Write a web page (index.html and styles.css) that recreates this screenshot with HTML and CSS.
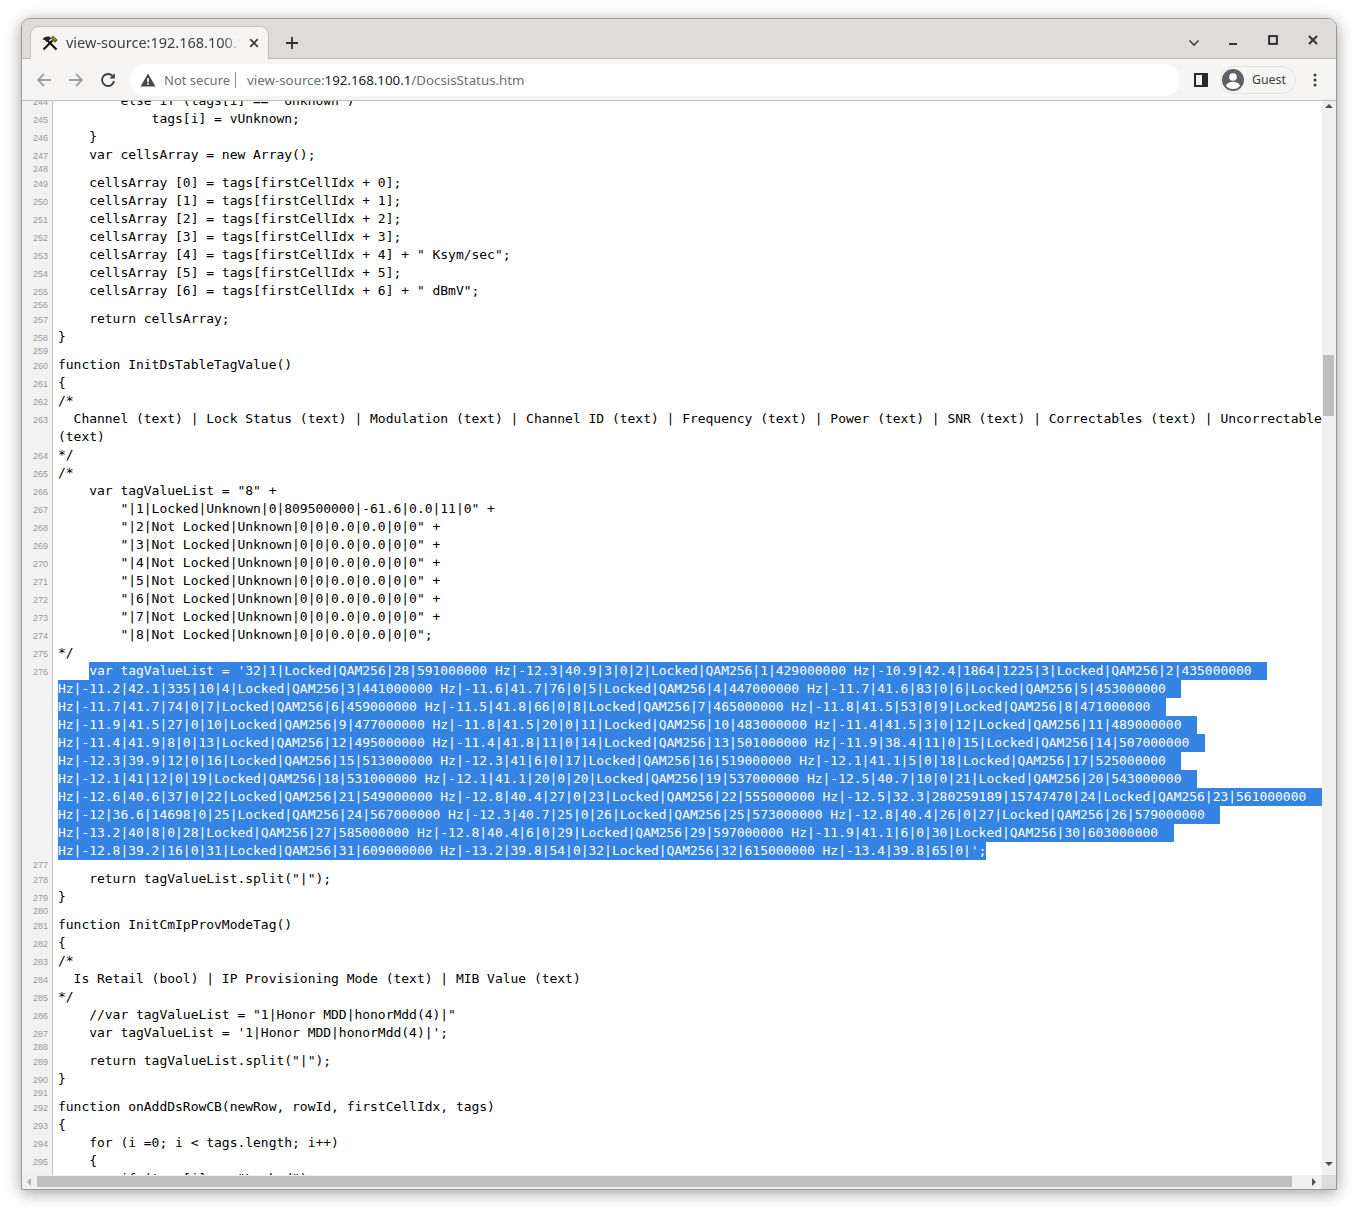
FILE: index.html
```html
<!DOCTYPE html>
<html lang="en">
<head>
<meta charset="utf-8">
<title>view-source:192.168.100.1/DocsisStatus.htm</title>
<link rel="stylesheet" href="styles.css">
</head>
<body>
<div class="window">
  <header class="strip">
    <div class="tab">
      <svg class="favicon" width="16" height="16" viewBox="0 0 16 16"><path d="M14.500 14.500 5.500 5.500" stroke="#111" stroke-width="2.200" fill="none"/><path d="M.5 4.500C2 2 5 1 8 2L9 4 6 5.500 4.500 7C3.500 5.500 2.500 4.500.5 4.500z" fill="#222"/><path d="M1.500 14.500 10.500 5.500" stroke="#111" stroke-width="2.200" fill="none"/><path d="M8.500 3 11 .7 15.800 5 13 7.800z" fill="#5f5f20"/><path d="M10 3.500 11.500 2 14 4.500 13 5.500z" fill="#8e8e3a"/></svg>
      <span class="tab-title">view-source:192.168.100.1/DocsisStatus.htm</span>
      <svg class="tab-close" width="10" height="10" viewBox="0 0 10 10"><path d="M1.200 1.200 8.800 8.800M8.800 1.200 1.200 8.800" stroke="#3c3c3c" stroke-width="1.700"/></svg>
    </div>
    <svg class="newtab" width="14" height="14" viewBox="0 0 14 14"><path d="M7 1v12M1 7h12" stroke="#303030" stroke-width="1.800"/></svg>
    <div class="winctl">
      <svg class="ctl-chev" width="12" height="8" viewBox="0 0 12 8"><path d="M1.500 1.500 6 6l4.500-4.500" stroke="#3c4043" stroke-width="1.600" fill="none"/></svg>
      <svg class="ctl-min" width="10" height="10" viewBox="0 0 10 10"><rect x="1" y="7" width="8" height="2" fill="#2e3436"/></svg>
      <svg class="ctl-max" width="10" height="10" viewBox="0 0 10 10"><rect x="1.100" y="1.100" width="7.800" height="7.800" stroke="#2e3436" stroke-width="2" fill="none"/></svg>
      <svg class="ctl-close" width="10" height="10" viewBox="0 0 10 10"><path d="M1 1 9 9M9 1 1 9" stroke="#2e3436" stroke-width="2"/></svg>
    </div>
  </header>
  <nav class="toolbar">
    <svg class="navbtn" width="16" height="16" viewBox="0 0 16 16"><path d="M15 8H2M8 2 2 8l6 6" stroke="#9aa0a6" stroke-width="1.800" fill="none"/></svg>
    <svg class="navbtn" width="16" height="16" viewBox="0 0 16 16"><path d="M1 8h13M8 2l6 6-6 6" stroke="#9aa0a6" stroke-width="1.800" fill="none"/></svg>
    <svg class="navbtn" width="16" height="16" viewBox="0 0 16 16"><path d="M13.200 4.800A6 6 0 1 0 14 9" stroke="#3c4043" stroke-width="1.900" fill="none"/><path d="M14.800 1.200v5.400H9.400z" fill="#3c4043"/></svg>
    <div class="omnibox">
      <svg class="warn" width="16" height="14" viewBox="0 0 16 14"><path d="M8 .5 15.500 13.500H.5z" fill="#45494d"/><rect x="7.200" y="5" width="1.600" height="4.400" fill="#fff"/><rect x="7.200" y="10.200" width="1.600" height="1.600" fill="#fff"/></svg>
      <span class="notsecure">Not secure</span>
      <span class="sep"></span>
      <span class="url"><span class="url-dim">view-source:</span>192.168.100.1<span class="url-dim">/DocsisStatus.htm</span></span>
    </div>
    <svg class="sidepanel" width="14" height="14" viewBox="0 0 14 14"><rect x="1" y="1" width="12" height="12" fill="none" stroke="#27292b" stroke-width="2"/><rect x="8" y="1" width="5" height="12" fill="#27292b"/></svg>
    <div class="guest">
      <svg width="22" height="22" viewBox="0 0 22 22"><circle cx="11" cy="11" r="11" fill="#5f6368"/><circle cx="11" cy="8" r="3.800" fill="#fff"/><path d="M3.800 16.500c1.600-2.600 4.400-3.700 7.200-3.700s5.600 1.100 7.200 3.700A9 9 0 0 1 11 20a9 9 0 0 1-7.200-3.500z" fill="#fff"/></svg>
      <span class="guest-name">Guest</span>
    </div>
    <svg class="menu" width="4" height="14" viewBox="0 0 4 14"><circle cx="2" cy="2" r="1.500" fill="#3c4043"/><circle cx="2" cy="7" r="1.500" fill="#3c4043"/><circle cx="2" cy="12" r="1.500" fill="#3c4043"/></svg>
  </nav>
  <main class="viewport">
    <div class="scroller">
      <table class="src">
        <tr><td class="num">244</td><td class="code">        else if (tags[i] == "Unknown")</td></tr>
        <tr><td class="num">245</td><td class="code">            tags[i] = vUnknown;</td></tr>
        <tr><td class="num">246</td><td class="code">    }</td></tr>
        <tr><td class="num">247</td><td class="code">    var cellsArray = new Array();</td></tr>
        <tr class="blank"><td class="num">248</td><td class="code"></td></tr>
        <tr><td class="num">249</td><td class="code">    cellsArray [0] = tags[firstCellIdx + 0];</td></tr>
        <tr><td class="num">250</td><td class="code">    cellsArray [1] = tags[firstCellIdx + 1];</td></tr>
        <tr><td class="num">251</td><td class="code">    cellsArray [2] = tags[firstCellIdx + 2];</td></tr>
        <tr><td class="num">252</td><td class="code">    cellsArray [3] = tags[firstCellIdx + 3];</td></tr>
        <tr><td class="num">253</td><td class="code">    cellsArray [4] = tags[firstCellIdx + 4] + " Ksym/sec";</td></tr>
        <tr><td class="num">254</td><td class="code">    cellsArray [5] = tags[firstCellIdx + 5];</td></tr>
        <tr><td class="num">255</td><td class="code">    cellsArray [6] = tags[firstCellIdx + 6] + " dBmV";</td></tr>
        <tr class="blank"><td class="num">256</td><td class="code"></td></tr>
        <tr><td class="num">257</td><td class="code">    return cellsArray;</td></tr>
        <tr><td class="num">258</td><td class="code">}</td></tr>
        <tr class="blank"><td class="num">259</td><td class="code"></td></tr>
        <tr><td class="num">260</td><td class="code">function InitDsTableTagValue()</td></tr>
        <tr><td class="num">261</td><td class="code">{</td></tr>
        <tr><td class="num">262</td><td class="code">/*</td></tr>
        <tr><td class="num">263</td><td class="code">  Channel (text) | Lock Status (text) | Modulation (text) | Channel ID (text) | Frequency (text) | Power (text) | SNR (text) | Correctables (text) | Uncorrectable
(text)</td></tr>
        <tr><td class="num">264</td><td class="code">*/</td></tr>
        <tr><td class="num">265</td><td class="code">/*</td></tr>
        <tr><td class="num">266</td><td class="code">    var tagValueList = "8" +</td></tr>
        <tr><td class="num">267</td><td class="code">        "|1|Locked|Unknown|0|809500000|-61.6|0.0|11|0" +</td></tr>
        <tr><td class="num">268</td><td class="code">        "|2|Not Locked|Unknown|0|0|0.0|0.0|0|0" +</td></tr>
        <tr><td class="num">269</td><td class="code">        "|3|Not Locked|Unknown|0|0|0.0|0.0|0|0" +</td></tr>
        <tr><td class="num">270</td><td class="code">        "|4|Not Locked|Unknown|0|0|0.0|0.0|0|0" +</td></tr>
        <tr><td class="num">271</td><td class="code">        "|5|Not Locked|Unknown|0|0|0.0|0.0|0|0" +</td></tr>
        <tr><td class="num">272</td><td class="code">        "|6|Not Locked|Unknown|0|0|0.0|0.0|0|0" +</td></tr>
        <tr><td class="num">273</td><td class="code">        "|7|Not Locked|Unknown|0|0|0.0|0.0|0|0" +</td></tr>
        <tr><td class="num">274</td><td class="code">        "|8|Not Locked|Unknown|0|0|0.0|0.0|0|0";</td></tr>
        <tr><td class="num">275</td><td class="code">*/</td></tr>
        <tr><td class="num">276</td><td class="code">    <span class="sel">var tagValueList = '32|1|Locked|QAM256|28|591000000 Hz|-12.3|40.9|3|0|2|Locked|QAM256|1|429000000 Hz|-10.9|42.4|1864|1225|3|Locked|QAM256|2|435000000  </span>
<span class="sel">Hz|-11.2|42.1|335|10|4|Locked|QAM256|3|441000000 Hz|-11.6|41.7|76|0|5|Locked|QAM256|4|447000000 Hz|-11.7|41.6|83|0|6|Locked|QAM256|5|453000000  </span>
<span class="sel">Hz|-11.7|41.7|74|0|7|Locked|QAM256|6|459000000 Hz|-11.5|41.8|66|0|8|Locked|QAM256|7|465000000 Hz|-11.8|41.5|53|0|9|Locked|QAM256|8|471000000  </span>
<span class="sel">Hz|-11.9|41.5|27|0|10|Locked|QAM256|9|477000000 Hz|-11.8|41.5|20|0|11|Locked|QAM256|10|483000000 Hz|-11.4|41.5|3|0|12|Locked|QAM256|11|489000000  </span>
<span class="sel">Hz|-11.4|41.9|8|0|13|Locked|QAM256|12|495000000 Hz|-11.4|41.8|11|0|14|Locked|QAM256|13|501000000 Hz|-11.9|38.4|11|0|15|Locked|QAM256|14|507000000  </span>
<span class="sel">Hz|-12.3|39.9|12|0|16|Locked|QAM256|15|513000000 Hz|-12.3|41|6|0|17|Locked|QAM256|16|519000000 Hz|-12.1|41.1|5|0|18|Locked|QAM256|17|525000000  </span>
<span class="sel">Hz|-12.1|41|12|0|19|Locked|QAM256|18|531000000 Hz|-12.1|41.1|20|0|20|Locked|QAM256|19|537000000 Hz|-12.5|40.7|10|0|21|Locked|QAM256|20|543000000  </span>
<span class="sel">Hz|-12.6|40.6|37|0|22|Locked|QAM256|21|549000000 Hz|-12.8|40.4|27|0|23|Locked|QAM256|22|555000000 Hz|-12.5|32.3|280259189|15747470|24|Locked|QAM256|23|561000000  </span>
<span class="sel">Hz|-12|36.6|14698|0|25|Locked|QAM256|24|567000000 Hz|-12.3|40.7|25|0|26|Locked|QAM256|25|573000000 Hz|-12.8|40.4|26|0|27|Locked|QAM256|26|579000000  </span>
<span class="sel">Hz|-13.2|40|8|0|28|Locked|QAM256|27|585000000 Hz|-12.8|40.4|6|0|29|Locked|QAM256|29|597000000 Hz|-11.9|41.1|6|0|30|Locked|QAM256|30|603000000  </span>
<span class="sel">Hz|-12.8|39.2|16|0|31|Locked|QAM256|31|609000000 Hz|-13.2|39.8|54|0|32|Locked|QAM256|32|615000000 Hz|-13.4|39.8|65|0|';</span></td></tr>
        <tr class="blank"><td class="num">277</td><td class="code"></td></tr>
        <tr><td class="num">278</td><td class="code">    return tagValueList.split("|");</td></tr>
        <tr><td class="num">279</td><td class="code">}</td></tr>
        <tr class="blank"><td class="num">280</td><td class="code"></td></tr>
        <tr><td class="num">281</td><td class="code">function InitCmIpProvModeTag()</td></tr>
        <tr><td class="num">282</td><td class="code">{</td></tr>
        <tr><td class="num">283</td><td class="code">/*</td></tr>
        <tr><td class="num">284</td><td class="code">  Is Retail (bool) | IP Provisioning Mode (text) | MIB Value (text)</td></tr>
        <tr><td class="num">285</td><td class="code">*/</td></tr>
        <tr><td class="num">286</td><td class="code">    //var tagValueList = "1|Honor MDD|honorMdd(4)|"</td></tr>
        <tr><td class="num">287</td><td class="code">    var tagValueList = '1|Honor MDD|honorMdd(4)|';</td></tr>
        <tr class="blank"><td class="num">288</td><td class="code"></td></tr>
        <tr><td class="num">289</td><td class="code">    return tagValueList.split("|");</td></tr>
        <tr><td class="num">290</td><td class="code">}</td></tr>
        <tr class="blank"><td class="num">291</td><td class="code"></td></tr>
        <tr><td class="num">292</td><td class="code">function onAddDsRowCB(newRow, rowId, firstCellIdx, tags)</td></tr>
        <tr><td class="num">293</td><td class="code">{</td></tr>
        <tr><td class="num">294</td><td class="code">    for (i =0; i &lt; tags.length; i++)</td></tr>
        <tr><td class="num">295</td><td class="code">    {</td></tr>
        <tr><td class="num">296</td><td class="code">        if (tags[i] == "Locked")</td></tr>
      </table>
    </div>
    <div class="vbar">
      <span class="arrow up"></span>
      <span class="vthumb"></span>
      <span class="arrow down"></span>
    </div>
    <div class="hbar">
      <span class="arrow left"></span>
      <span class="hthumb"></span>
      <span class="arrow right"></span>
    </div>
    <div class="corner"></div>
  </main>
</div>
</body>
</html>
```

FILE: styles.css
```css
* { box-sizing: border-box; }

html, body { margin: 0; height: 100%; background: #fff; }

body {
  padding: 18px 21px 0;
  font-family: "Noto Sans", "Open Sans", sans-serif;
  overflow: hidden;
}

.window {
  width: 1316px;
  height: 1172px;
  display: flex;
  flex-direction: column;
  border: 1px solid #9a9a98;
  border-radius: 9px 9px 0 0;
  background: #f6f5f4;
  box-shadow: 0 3px 16px rgba(0, 0, 0, 0.38);
  overflow: hidden;
}

/* tab strip */
.strip {
  height: 40px;
  flex: none;
  display: flex;
  align-items: flex-end;
  padding-left: 8px;
  background: #dedbd8;
  border-bottom: 1px solid #bdbbb8;
}

.tab {
  width: 239px;
  height: 33px;
  margin-bottom: -1px;
  display: flex;
  align-items: center;
  gap: 8px;
  padding: 0 9px 0 11px;
  background: #f6f5f4;
  border: 1px solid #c4c2bf;
  border-bottom: 0;
  border-radius: 9px 9px 0 0;
}

.favicon { flex: none; }

.tab-title {
  flex: 1;
  min-width: 0;
  margin-bottom: 2px;
  overflow: hidden;
  white-space: nowrap;
  font-size: 14.500px;
  line-height: 20px;
  color: #3c4043;
  -webkit-mask-image: linear-gradient(to right, #000 90%, transparent 100%);
  mask-image: linear-gradient(to right, #000 90%, transparent 100%);
}

.tab-close { flex: none; }

.newtab { margin: 0 0 8px 16px; }

.winctl {
  margin-left: auto;
  align-self: stretch;
  position: relative;
  width: 160px;
  display: flex;
}

.ctl-chev { position: absolute; left: 12px; top: 20px; }
.ctl-min  { position: absolute; left: 52px; top: 17px; }
.ctl-max  { position: absolute; left: 92px; top: 16px; }
.ctl-close { position: absolute; left: 132px; top: 16px; }

/* toolbar */
.toolbar {
  height: 42px;
  flex: none;
  display: flex;
  align-items: center;
  padding: 0 19px 0 14px;
  background: #f6f5f4;
  border-bottom: 1px solid #bfbdbb;
}

.navbtn { flex: none; margin-right: 16px; }

.omnibox {
  width: 1050px;
  height: 32px;
  flex: none;
  margin-left: -2px;
  display: flex;
  align-items: center;
  padding-left: 10px;
  background: #fff;
  border-radius: 16px;
  font-size: 13px;
  letter-spacing: 0;
}

.warn { flex: none; margin-right: 8px; }

.notsecure { color: #6b7075; }

.sep {
  width: 1px;
  height: 16px;
  margin: 0 11px 0 5px;
  background: #8a8d91;
}

.url { color: #202124; white-space: nowrap; font-size: 13.300px; }
.url-dim { color: #6b7075; }

.sidepanel { flex: none; margin-left: 14px; }

.guest {
  width: 76px;
  height: 28px;
  margin-left: 12px;
  flex: none;
  display: flex;
  align-items: center;
  gap: 8px;
  padding-left: 1px;
  border: 1px solid #e3e2e0;
  border-radius: 14px;
}

.guest-name { font-size: 12.300px; color: #3c4043; }

.menu { flex: none; margin-left: 17px; }

/* page area */
.viewport {
  flex: 1;
  min-height: 0;
  display: grid;
  grid-template-columns: 1fr 14px;
  grid-template-rows: 1fr 14px;
  background: #fff;
}

.scroller { overflow: hidden; min-width: 0; min-height: 0; }

.src {
  width: 1300px;
  margin-top: -9px;
  table-layout: fixed;
  border-collapse: separate;
  border-spacing: 0;
}

.src td { padding: 0; vertical-align: baseline; }

.num {
  width: 31px;
  padding-right: 4px !important;
  text-align: right;
  background: #f2f2f2;
  border-right: 1px solid #c4c4c4;
  font-family: "Liberation Sans", Arial, sans-serif;
  font-size: 9px;
  line-height: 10px;
  color: #999;
}

.code {
  padding-left: 5px !important;
  font-family: "DejaVu Sans Mono", monospace;
  font-size: 13px;
  letter-spacing: -0.025px;
  line-height: 18px;
  color: #000;
  white-space: pre;
}

.blank .code { line-height: 10px; }

.sel {
  display: inline-block;
  background: #3584e4;
  color: #fff;
  white-space: pre;
}

/* scrollbars */
.vbar, .hbar { background: #f0f0f0; position: relative; }

.vthumb {
  position: absolute;
  left: 1px;
  top: 254px;
  width: 11px;
  height: 61px;
  background: #bfbfbf;
}

.hthumb {
  position: absolute;
  left: 15px;
  top: 1px;
  width: 1255px;
  height: 11px;
  background: #bfbfbf;
}

.arrow { position: absolute; width: 0; height: 0; border: 4px solid transparent; }
.arrow.up    { left: 3px; top: 3px; border-top: 0; border-bottom: 4px solid #505050; }
.arrow.down  { left: 3px; top: 1061px; border-bottom: 0; border-top: 4px solid #505050; }
.arrow.left  { left: 5px; top: 3px; border-left: 0; border-right: 4px solid #b0b0b0; }
.arrow.right { left: 1290px; top: 3px; border-right: 0; border-left: 4px solid #505050; }

.corner { background: #dcdcdc; }
```
